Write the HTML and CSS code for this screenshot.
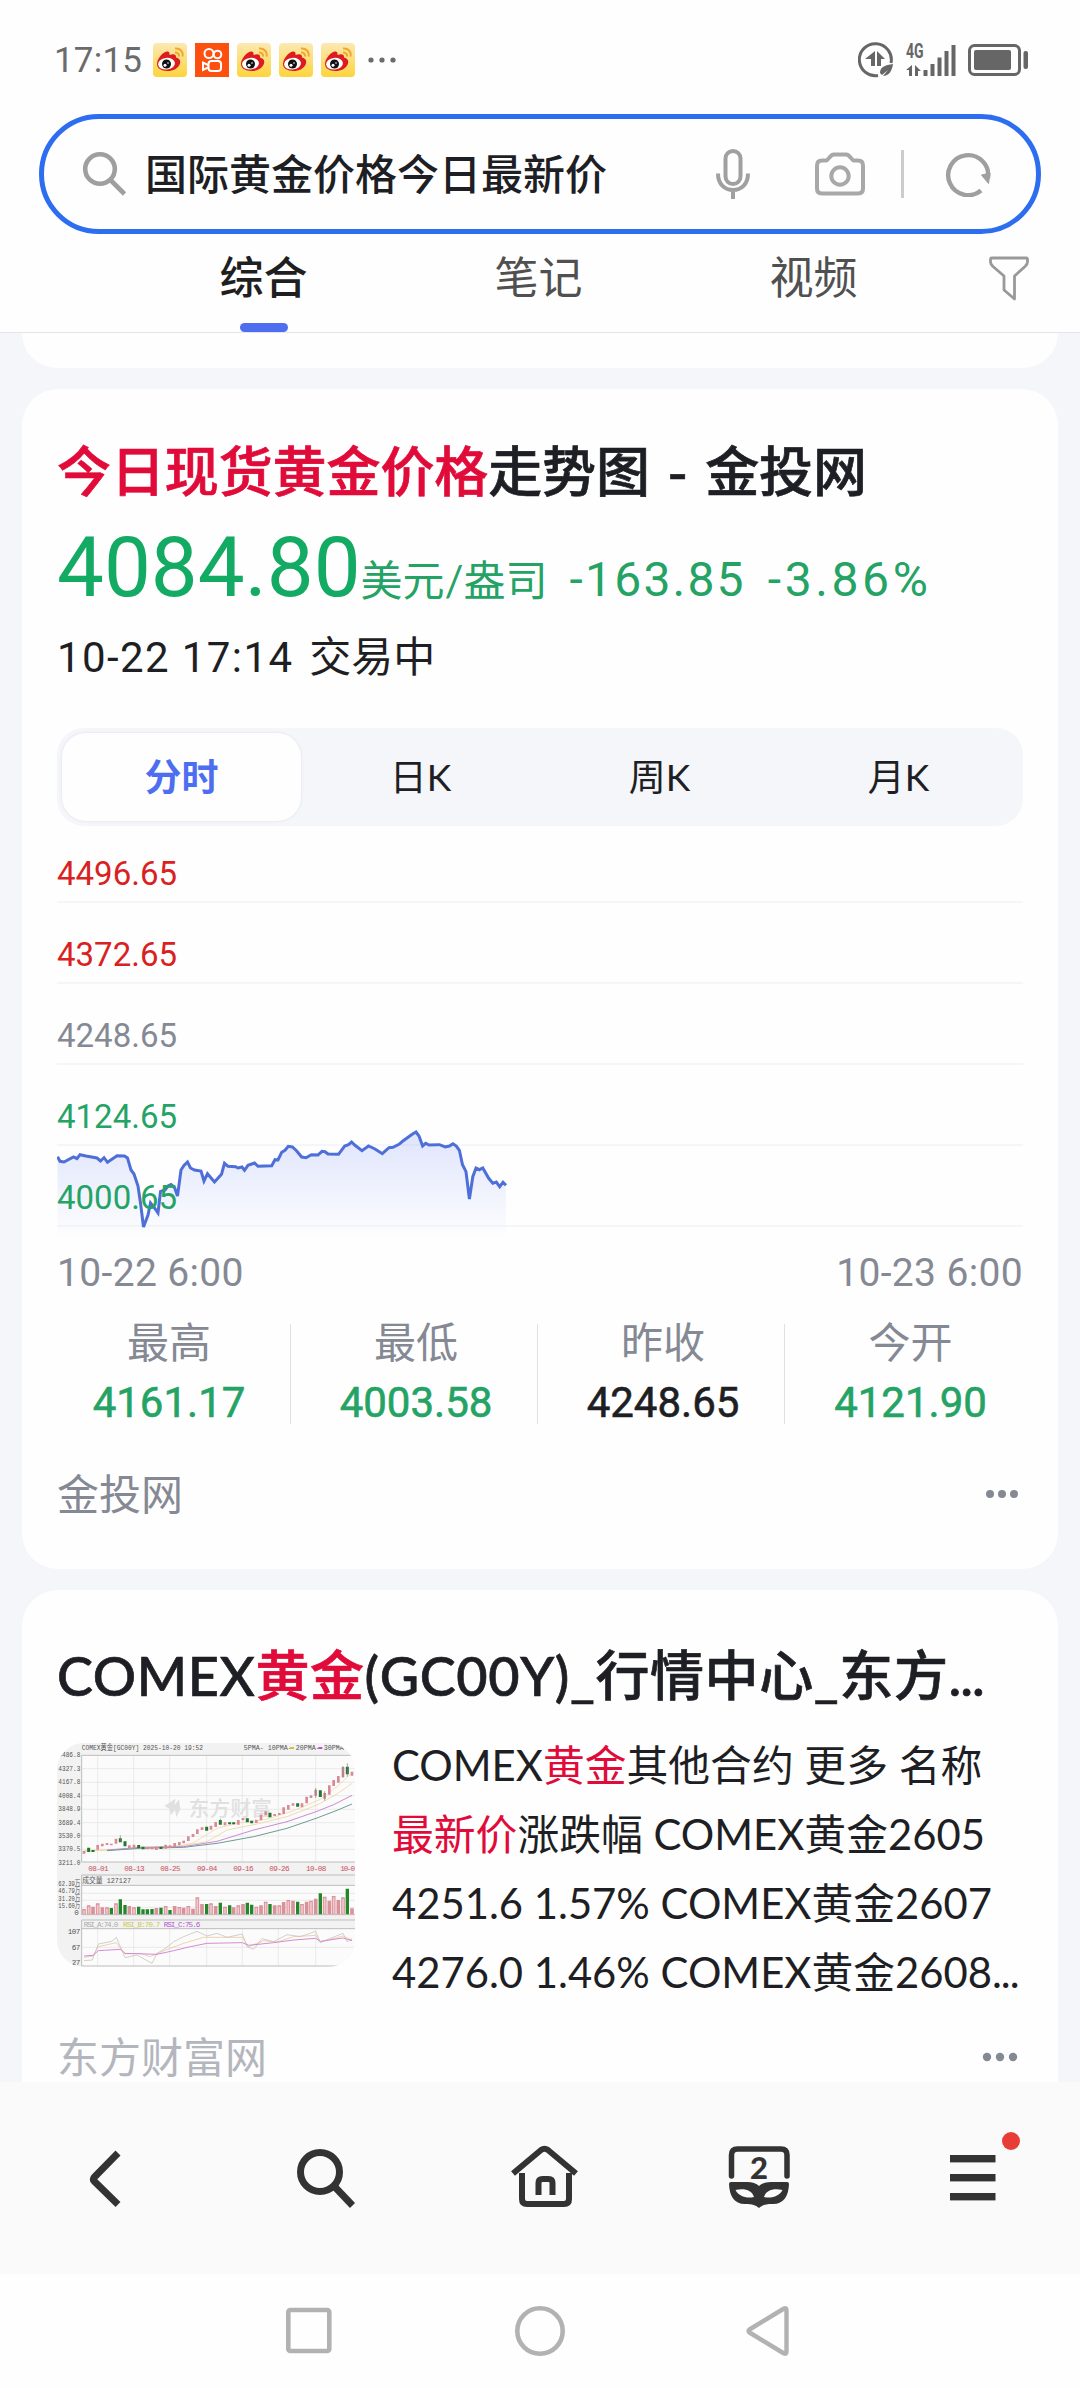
FILE: index.html
```html
<!DOCTYPE html>
<html lang="zh-CN">
<head>
    <meta charset="UTF-8">
    <meta name="viewport" content="width=device-width, initial-scale=1.0">
    <title>国际黄金价格今日最新价</title>
    <link rel="stylesheet" href="styles.css">
</head>
<body>
    <svg class="defs" width="0" height="0">
        <symbol id="weibo" viewBox="0 0 34 34">
            <rect width="34" height="34" rx="4" fill="url(#weiboBg)"/>
            <path d="M22 5.500c5-.5 8.500 3 7.500 8M22 9.500c2.500-.3 4.500 1.500 4 4" fill="none" stroke="#f2a62c" stroke-width="2"/>
            <path d="M4 21C4 15 11 7.500 15 8.500c2 .7 1.500 2.500 1.500 3.500 3-1 7-1.500 6.500 2.500 3 .8 5 2.700 4 6C25.500 25.500 20 28 14.500 28 8 28 4 25 4 21z" fill="#dd1c20"/>
            <ellipse cx="13.500" cy="20.700" rx="8.500" ry="5.800" fill="#fff" transform="rotate(-6 13.500 20.700)"/>
            <circle cx="13.500" cy="21" r="4.500" fill="#111"/>
            <circle cx="12" cy="22.200" r="1.500" fill="#fff"/>
            <circle cx="15" cy="20" r=".8" fill="#fff"/>
        </symbol>
        <linearGradient id="weiboBg" x1="0" y1="0" x2="0" y2="1">
            <stop offset="0" stop-color="#fbe9b4"/>
            <stop offset="1" stop-color="#fdd43c"/>
        </linearGradient>
    </svg>

    <header>
        <div class="status-bar">
            <span class="time">17:15</span>
            <div class="notices">
                <svg width="34" height="34"><use href="#weibo"/></svg>
                <svg width="34" height="34" viewBox="0 0 34 34">
                    <rect width="34" height="34" fill="#fd4f0d"/>
                    <g fill="none" stroke="#fff" stroke-width="2">
                        <circle cx="14" cy="10.500" r="4.500"/>
                        <circle cx="22.500" cy="11.500" r="3.800"/>
                        <rect x="13.500" y="18" width="12.500" height="10" rx="3"/>
                        <path d="M13 22l-5-2.500v7.500l5-2.500"/>
                    </g>
                </svg>
                <svg width="34" height="34"><use href="#weibo"/></svg>
                <svg width="34" height="34"><use href="#weibo"/></svg>
                <svg width="34" height="34"><use href="#weibo"/></svg>
            </div>
            <svg width="28" height="6" viewBox="0 0 28 6" fill="#6b6b6b">
                <circle cx="3" cy="3" r="2.600"/><circle cx="14" cy="3" r="2.600"/><circle cx="25" cy="3" r="2.600"/>
            </svg>
            <div class="signals">
                <svg width="36" height="36" viewBox="0 0 36 36">
                    <path d="M33 21A16 16 0 1 0 20 33.500" fill="none" stroke="#666" stroke-width="3"/>
                    <path d="M17 9v15h-4v-7H7zM19 9l8 8h-4v7h-4z" fill="#666"/>
                    <path d="M22 31c0-6 5-8 13-9-1 7-4 12-10 12l5-6-6 5z" fill="#666"/>
                </svg>
                <div class="network">
                    <span class="net-label">4G</span>
                    <svg width="50" height="33" viewBox="0 0 50 33" fill="#666">
                        <path d="M6 21v11H3v-6H0zM9 21l6 6h-3v5H9z"/>
                        <rect x="17.500" y="26" width="4" height="6"/>
                        <rect x="24.500" y="20" width="4" height="12"/>
                        <rect x="31.500" y="13.500" width="4" height="18.500"/>
                        <rect x="38.500" y="7" width="4" height="25"/>
                        <rect x="45.500" y="1" width="4" height="31"/>
                    </svg>
                </div>
                <svg width="60" height="34" viewBox="0 0 60 34">
                    <rect x="1.500" y="2.500" width="50" height="29" rx="5" fill="none" stroke="#666" stroke-width="3"/>
                    <rect x="6" y="7" width="37" height="20" rx="2" fill="#666"/>
                    <rect x="55.500" y="8" width="4.500" height="18" rx="2" fill="#666"/>
                </svg>
            </div>
        </div>

        <div class="search-box">
            <svg class="icon-search" width="46" height="46" viewBox="0 0 46 46" fill="none" stroke="#9f9f9f" stroke-width="4.600">
                <circle cx="18" cy="18" r="14.800"/>
                <path d="M28.500 29l14 14"/>
            </svg>
            <span class="query">国际黄金价格今日最新价</span>
            <svg class="icon-mic" width="36" height="52" viewBox="0 0 36 52" fill="none" stroke="#a0a0a0" stroke-width="4">
                <rect x="10.500" y="3" width="15" height="33" rx="7.500"/>
                <path d="M3 25.500c0 11 7 16.500 15 16.500s15-5.500 15-16.500M18 42v9"/>
            </svg>
            <svg class="icon-camera" width="52" height="46" viewBox="0 0 52 46" fill="none" stroke="#a8a8a8" stroke-width="4">
                <path d="M8 9.500h4c3 0 3.500-6 8-6h12c4.500 0 5 6 8 6h4q5 0 5 5v23q0 5-5 5H8q-5 0-5-5v-23q0-5 5-5z"/>
                <circle cx="26" cy="25" r="8.700"/>
            </svg>
            <span class="divider"></span>
            <svg class="icon-refresh" width="46" height="46" viewBox="0 0 46 46">
                <path d="M36 39.500A20 20 0 1 1 43 27" fill="none" stroke="#9f9f9f" stroke-width="4.400"/>
                <path d="M36.500 24l8.500-2-1.500 10.500z" fill="#9f9f9f" stroke="#9f9f9f"/>
            </svg>
        </div>

        <nav class="tabs">
            <a class="tab active">综合</a>
            <a class="tab">笔记</a>
            <a class="tab">视频</a>
            <a class="filter">
                <svg width="42" height="46" viewBox="0 0 42 46" fill="none" stroke="#999" stroke-width="2.800" stroke-linejoin="round">
                    <path d="M4 3h34q1.500 0 1.500 1.500V7c0 2-1 3-2.500 4.500L26.500 21v23L16 35V21L5 11.500C3.500 10 2.500 9 2.500 7V4.500Q2.500 3 4 3z"/>
                </svg>
            </a>
        </nav>
    </header>

    <main>
        <section class="card card-tail"></section>

        <section class="card quote">
            <h2><em>今日现货黄金价格</em>走势图 - 金投网</h2>
            <div class="price-row">
                <span class="price">4084.80</span><span class="unit">美元/盎司</span>
                <span class="change">-163.85</span>
                <span class="change percent">-3.86%</span>
            </div>
            <div class="trade-time"><span class="date">10-22 17:14</span> 交易中</div>

            <div class="segments">
                <span class="segment active">分时</span>
                <span class="segment">日K</span>
                <span class="segment">周K</span>
                <span class="segment">月K</span>
            </div>

            <div class="chart">
                <svg class="chart-line" width="965" height="160" viewBox="0 0 965 160">
                    <defs>
                        <linearGradient id="area" x1="0" y1="52" x2="0" y2="158" gradientUnits="userSpaceOnUse">
                            <stop offset="0" stop-color="#4e6ef2" stop-opacity=".18"/>
                            <stop offset="1" stop-color="#4e6ef2" stop-opacity="0"/>
                        </linearGradient>
                        <path id="trend" d="M.5 76.700L3 81.300 7 82 16.500 77 20 78.700 23 74.700 29 76 40 78 43.500 81 47 77.700 50.500 82.300 60 75.700 67.500 76 70.500 78 74 90 77 94 81 106 83.500 123 86.500 147 91 135 93.500 123 97.500 128 101 133 103.500 111.700 108 110 111 106 114 104.500 117.500 107.500 120.500 116 124 90 127 85.500 130.500 82 133.500 88 137.500 90 144 91 147 101 150.500 93.700 157.500 102 164.500 94.300 167.500 83.300 171 86.300 178.500 86.700 181 88 185 87 187.500 90.300 191 85.300 197.500 83 201 86.300 214.700 85.700 218 79.700 221 80 224.700 72.300 228 70.300 231.300 66.300 235.400 67 239.500 70.700 244.700 77 249 77.700 254.400 74.700 261 75 265 71.300 268 71.700 271 74 281.500 74.300 287.700 66 291.500 64.700 294.600 62 298 65.300 305 70.700 311.500 66 318 69 325.300 73.700 332 67.700 336 67.300 342 64.300 345.600 61.300 355.200 54.300 359 52 362 56 365.600 66 368.700 63.300 372 65 382.400 64.700 388.300 67 392.400 66 396 63.700 399.300 66 402.400 70.300 405.500 84.700 409 91.700 412.400 119 415.800 96.700 419 88 422.400 89.700 425.800 88 431.700 98.300 435.800 103.300 439.300 102 442.700 106.700 446 102.300 449 105.300"/>
                    </defs>
                    <path d="M.5 76.700L3 81.300 7 82 16.500 77 23 74.700 40 78 50.500 82.300 60 75.700 70.500 78 74 90 77 94 81 106 86.500 147 93.500 123 101 133 103.500 111.700 114 104.500 120.500 116 124 90 130.500 82 133.500 88 144 91 147 101 150.500 93.700 157.500 102 164.500 94.300 167.500 83.300 187.500 90.300 197.500 83 201 86.300 214.700 85.700 224.700 72.300 231.300 66.300 235.400 67 244.700 77 254.400 74.700 265 71.300 281.500 74.300 294.600 62 305 70.700 311.500 66 325.300 73.700 342 64.300 359 52 365.600 66 388.300 67 396 63.700 402.400 70.300 409 91.700 412.400 119 419 88 425.800 88 435.800 103.300 449 105.300V158H.5z" fill="url(#area)"/>
                    <use href="#trend" fill="none" stroke="#4e6fd8" stroke-width="3"/>
                </svg>
                <div class="grid-row up"><span>4496.65</span></div>
                <div class="grid-row up"><span>4372.65</span></div>
                <div class="grid-row"><span>4248.65</span></div>
                <div class="grid-row down"><span>4124.65</span></div>
                <div class="grid-row down"><span>4000.65</span></div>
            </div>
            <div class="axis"><span>10-22 6:00</span><span>10-23 6:00</span></div>

            <div class="stats">
                <div class="stat"><span>最高</span><b class="down">4161.17</b></div>
                <div class="stat"><span>最低</span><b class="down">4003.58</b></div>
                <div class="stat"><span>昨收</span><b>4248.65</b></div>
                <div class="stat"><span>今开</span><b class="down">4121.90</b></div>
            </div>

            <div class="source">
                <span>金投网</span>
                <svg width="34" height="10" viewBox="0 0 34 10" fill="#858994">
                    <circle cx="5" cy="5" r="4"/><circle cx="17" cy="5" r="4"/><circle cx="29" cy="5" r="4"/>
                </svg>
            </div>
        </section>

        <section class="card result">
            <h2>COMEX<em>黄金</em>(GC00Y)_行情中心_东方<span class="dots">...</span></h2>
            <div class="result-body">
                <svg class="thumb" width="298" height="224" viewBox="50 69 894 672">
                    <rect x="50" y="69" width="894" height="672" fill="#f2f2f2"/>
                    <rect x="124" y="106" width="820" height="320" fill="#fbfbfb"/>
                    <rect x="124" y="496" width="820" height="88" fill="#fbfbfb"/>
                    <rect x="124" y="626" width="820" height="115" fill="#fbfbfb"/>
                    <path d="M124 146H944M124 187H944M124 227H944M124 268H944M124 308H944M124 348H944M124 388H944M124 520H944M124 541H944M124 562H944M124 682H944M172 106V426M280 106V426M388 106V426M499 106V426M606 106V426M714 106V426M826 106V426M172 626V738M280 626V738M388 626V738M499 626V738M606 626V738M714 626V738M826 626V738" stroke="#e2e2e2" stroke-width="2"/>
                    <path d="M944 106H124V426H944M944 465H124V584H944M124 496H944M944 600H124V738H944M124 626H944" fill="none" stroke="#bdbdbd" stroke-width="3"/>
                    <g class="watermark"><path d="M372 258l34-22-4 20 14-18 4 30-12 24-4-22-12 16-4-20z"/><text x="445" y="288" textLength="250">东方财富</text></g>

                    <g fill="none" stroke-width="2">
                        <path d="M131 392L240 388 300 382 420 378 458 369 530 325 600 308 680 298 760 272 840 238 890 200 935 158" stroke="#f0cf98"/>
                        <path d="M131 394L240 388 420 378 500 365 560 330 650 312 740 290 830 255 890 222 935 190" stroke="#eccb8a"/>
                        <path d="M200 390L300 382 430 380 530 364 640 330 740 305 830 274 880 254 935 226" stroke="#c98ad4" stroke-width="3"/>
                        <path d="M200 392L300 385 430 382 530 370 640 350 740 325 830 294 890 271 935 252" stroke="#6f9a96" stroke-width="3"/>
                    </g>
                    <!-- candles -->
                    <path d="M131 393v8M172 375v14M186 371v8M200 369v6M213 371v5M227 356v15M267 376v8M281 374v9M321 382v6M335 382v6M348 380v10M376 374v12M389 376v8M403 369v13M417 366v10M430 362v8M444 349v14M458 342v9M471 328v14M485 322v8M512 317v12M526 306v15M554 307v9M594 300v14M608 294v7M648 299v10M662 284v17M676 274v12M703 282v6M717 279v6M730 262v20M744 255v14M758 250v7M785 250v12M799 230v20M812 226v8M826 209v18M853 219v17M867 196v28M880 180v18M894 168v20M908 141v30M935 155v12" stroke="#d98a95" stroke-width="8"/>
                    <path d="M145 383v13M158 390v6M240 355v12M254 364v15M295 375v9M308 380v8M362 380v7M499 320v12M540 300v14M568 307v6M580 307v6M621 295v12M634 302v8M689 278v14M772 250v10M840 211v20M921 140v23" stroke="#23772e" stroke-width="9"/>
                    <path d="M240 346v20M540 296v12M826 204v30M853 214v28M921 130v40M908 138v36" stroke="#7a7a7a" stroke-width="2"/>
                    <!-- volume -->
                    <path d="M131 583V567M145 583V556M158 583V560M172 583V550M186 583V562M200 583V562M227 583V550M267 583V558M281 583V562M348 583V564M376 583V558M403 583V558M417 583V561M430 583V563M444 583V558M458 583V566M471 583V532M485 583V552M512 583V550M526 583V558M554 583V560M580 583V562M594 583V556M608 583V552M648 583V560M662 583V556M676 583V545M703 583V556M717 583V556M730 583V546M744 583V540M758 583V542M785 583V552M799 583V545M812 583V542M826 583V536M853 583V530M867 583V542M880 583V528M894 583V540M908 583V532M935 583V565" stroke="#d8929a" stroke-width="11"/>
                    <path d="M131 581V571M145 581V560M172 581V554M200 581V566M227 581V554M281 581V566M376 581V562M417 581V565M444 581V562M471 581V536M512 581V554M554 581V564M594 581V560M648 581V564M676 581V549M717 581V560M744 581V544M785 581V556M812 581V546M853 581V534M880 581V532M908 581V536" stroke="#f3c7cb" stroke-width="5"/>
                    <path d="M213 583V564M240 583V538M254 583V555M295 583V560M308 583V568M321 583V568M335 583V567M362 583V563M389 583V570M499 583V552M540 583V548M568 583V556M621 583V548M634 583V554M689 583V552M772 583V545M840 583V520M921 583V506" stroke="#23862b" stroke-width="10"/>
                    <!-- rsi -->
                    <g fill="none" stroke-width="2">
                        <path d="M131 722L156 720 174 672 215 664 228 652 254 713 290 705 335 730 350 700 376 685 400 665 430 650 470 634 500 648 530 640 560 652 606 642 620 680 640 688 665 656 700 665 740 644 780 650 826 634 840 668 870 655 908 640 920 665 935 656" stroke="#b9bcb4"/>
                        <path d="M131 712L158 708 174 680 228 668 254 702 300 700 330 710 376 690 430 670 490 652 540 652 606 652 625 680 670 662 710 666 760 650 826 646 840 666 908 648 935 660" stroke="#e3bf8c"/>
                        <path d="M131 708L158 706 174 692 240 688 254 700 350 703 400 692 450 680 500 670 606 668 625 676 700 668 760 660 826 655 840 664 908 654 935 662" stroke="#d58ad4" stroke-width="3"/>
                    </g>
                    <g class="thumb-text">
                        <text x="124" y="91" textLength="364" lengthAdjust="spacingAndGlyphs">COMEX黄金[GC00Y] 2025-10-20 19:52</text>
                        <text x="610" y="91" textLength="300" lengthAdjust="spacingAndGlyphs">5PMA- 10PMA- 20PMA- 30PMA</text>
                        <text x="54" y="112" textLength="66" lengthAdjust="spacingAndGlyphs">4486.8</text>
                        <text x="54" y="152" textLength="66" lengthAdjust="spacingAndGlyphs">4327.3</text>
                        <text x="54" y="193" textLength="66" lengthAdjust="spacingAndGlyphs">4167.8</text>
                        <text x="54" y="233" textLength="66" lengthAdjust="spacingAndGlyphs">4008.4</text>
                        <text x="54" y="274" textLength="66" lengthAdjust="spacingAndGlyphs">3848.9</text>
                        <text x="54" y="314" textLength="66" lengthAdjust="spacingAndGlyphs">3689.4</text>
                        <text x="54" y="354" textLength="66" lengthAdjust="spacingAndGlyphs">3530.0</text>
                        <text x="54" y="394" textLength="66" lengthAdjust="spacingAndGlyphs">3370.5</text>
                        <text x="54" y="434" textLength="66" lengthAdjust="spacingAndGlyphs">3211.0</text>
                        <text x="126" y="490" textLength="146" lengthAdjust="spacingAndGlyphs">成交量 127127</text>
                        <text x="54" y="498" textLength="66" lengthAdjust="spacingAndGlyphs">62.39万</text>
                        <text x="54" y="519" textLength="66" lengthAdjust="spacingAndGlyphs">46.79万</text>
                        <text x="54" y="542" textLength="66" lengthAdjust="spacingAndGlyphs">31.20万</text>
                        <text x="54" y="565" textLength="66" lengthAdjust="spacingAndGlyphs">15.60万</text>
                        <text x="102" y="586">0</text>
                        <text x="82" y="641" textLength="38">107</text>
                        <text x="94" y="690" textLength="26">67</text>
                        <text x="94" y="736" textLength="26">27</text>
                    </g>
                    <g class="thumb-dates">
                        <text x="144" y="453">08-01</text>
                        <text x="252" y="453">08-13</text>
                        <text x="360" y="453">08-25</text>
                        <text x="470" y="453">09-04</text>
                        <text x="579" y="453">09-16</text>
                        <text x="687" y="453">09-26</text>
                        <text x="797" y="453">10-08</text>
                        <text x="900" y="453" textLength="42">10-0</text>
                    </g>
                    <g class="thumb-rsi">
                        <text x="130" y="620" fill="#aaa" textLength="104">RSI_A:74.0</text>
                        <text x="248" y="620" fill="#cdc94a" textLength="112">RSI_B:70.7</text>
                        <text x="370" y="620" fill="#b355cf" textLength="110">RSI_C:75.6</text>
                    </g>
                    <path d="M749 84h12" stroke="#cfc53a" stroke-width="6"/>
                    <path d="M834 84h12" stroke="#c14fd0" stroke-width="6"/>
                </svg>
                <p>COMEX<em>黄金</em>其他合约 更多 名称<br><em>最新价</em>涨跌幅 COMEX黄金2605<br>4251.6 1.57% COMEX黄金2607<br>4276.0 1.46% COMEX黄金2608<span class="dots">...</span></p>
            </div>
            <div class="source faded">
                <span>东方财富网</span>
                <svg width="36" height="10" viewBox="0 0 36 10" fill="#858994">
                    <circle cx="5" cy="5" r="4.200"/><circle cx="18" cy="5" r="4.200"/><circle cx="31" cy="5" r="4.200"/>
                </svg>
            </div>
        </section>
    </main>

    <footer>
        <div class="toolbar">
            <a>
                <svg width="64" height="64" viewBox="0 0 64 64" fill="none" stroke="#333" stroke-width="7" stroke-linejoin="round">
                    <path d="M43 7L19.500 31q-2.500 2 0 4.500L43 58.500"/>
                </svg>
            </a>
            <a class="find">
                <svg width="64" height="64" viewBox="0 0 64 64" fill="none" stroke="#333" stroke-width="7">
                    <circle cx="26" cy="26" r="19.500"/>
                    <path d="M40 40l18.500 19.500"/>
                </svg>
            </a>
            <a class="home">
                <svg width="70" height="66" viewBox="0 0 70 66" fill="none" stroke="#333" stroke-width="6">
                    <path d="M3 28.500L31 5q3.500-2.500 7 0L66 28.500"/>
                    <path d="M12 28v26q0 5 5 5H54q5 0 5-5V28"/>
                    <path d="M28.500 50V38q0-4 4-4h6q4 0 4 4v12"/>
                </svg>
            </a>
            <a class="windows">
                <svg width="62" height="66" viewBox="0 0 62 66">
                    <path d="M3.500 31V10q0-6 6-6H53q6 0 6 6v21" fill="none" stroke="#333" stroke-width="5.500" stroke-linecap="round"/>
                    <path fill-rule="evenodd" fill="#333" d="M3 37h16q8 0 12 4 4-4 12-4h16q2 0 2 2c-.5 12-5 20-16 20-8 0-10 1-14 4-4-3-6-4-14-4C6 59 1.500 51 1 39q0-2 2-2zM7.500 45c3 6 11 9 18.500 7-2-6.500-9-9-18.500-7zM54.500 45c-9.500-2-16.500.5-18.500 7 7.500 2 15.500-1 18.500-7z"/>
                </svg>
                <span class="count">2</span>
            </a>
            <a class="menu">
                <svg width="46" height="46" viewBox="0 0 46 46" fill="#333">
                    <rect y="0" width="45.500" height="7.400"/><rect y="19" width="45.500" height="7.400"/><rect y="38" width="45.500" height="7.400"/>
                </svg>
                <span class="badge"></span>
            </a>
        </div>
        <div class="system-nav">
            <svg width="50" height="52" viewBox="0 0 50 52" fill="none" stroke="#b2b2b2" stroke-width="4.600"><rect x="4.300" y="5" width="41" height="41" rx="2"/></svg>
            <svg width="52" height="52" viewBox="0 0 52 52" fill="none" stroke="#b2b2b2" stroke-width="4.600"><circle cx="26" cy="26" r="22.700"/></svg>
            <svg width="50" height="52" viewBox="0 0 50 52" fill="none" stroke="#b2b2b2" stroke-width="4.400" stroke-linejoin="round"><path d="M3.500 24.500L38 3.500q2.500-1 2.500 1.500v42q0 2.500-2.500 1.500L3.500 27.500q-2-1.500 0-3z"/></svg>
        </div>
    </footer>
</body>
</html>
```
FILE: styles.css
```css
* {
    box-sizing: border-box;
}

body {
    margin: 0;
    width: 1080px;
    height: 2388px;
    display: flex;
    flex-direction: column;
    overflow: hidden;
    background: #f5f6fa;
    color: #1e1f24;
    font-family: Lato, "Noto Sans CJK SC", sans-serif;
    font-size: 42px;
}

svg {
    display: block;
    flex: none;
}

.defs {
    position: absolute;
}

em {
    font-style: normal;
    color: #e10b3a;
}

/* Header */
header {
    background: #fefefe;
    height: 333px;
    border-bottom: 1px solid #e4e5e8;
}

.status-bar {
    height: 114px;
    padding: 6px 52px 0 54px;
    display: flex;
    align-items: center;
}

.time {
    width: 99px;
    font-family: Roboto, sans-serif;
    font-size: 35px;
    letter-spacing: .2px;
    color: #6b6b6b;
}

.notices {
    display: flex;
    gap: 8px;
    margin-right: 13px;
}

.signals {
    display: flex;
    align-items: center;
    gap: 12px;
    margin-left: auto;
}

.network {
    position: relative;
}

.net-label {
    position: absolute;
    left: 0;
    top: -2px;
    font: bold 20px/18px Roboto, sans-serif;
    transform: scaleX(.7);
    transform-origin: left;
    color: #666;
}

.search-box {
    margin: 0 39px;
    height: 120px;
    border: 5px solid #2d6ef0;
    border-radius: 60px;
    display: flex;
    align-items: center;
    padding: 0 45px 0 38px;
}

.query {
    margin: 0 auto 4px 17px;
    font-family: "Noto Sans CJK SC", sans-serif;
    font-weight: 500;
    line-height: 60px;
}

.icon-mic {
    margin-right: 63px;
}

.icon-camera {
    margin-right: 35px;
}

.divider {
    width: 3px;
    height: 48px;
    background: #ccc;
    margin-right: 41px;
}

.tabs {
    display: flex;
    height: 98px;
    padding-left: 126px;
    font-family: "Noto Sans CJK SC", sans-serif;
    font-size: 44px;
}

.tab {
    width: 275px;
    display: flex;
    flex-direction: column;
    align-items: center;
    justify-content: space-between;
    line-height: 82px;
    color: #505050;
}

.tab.active {
    font-weight: 500;
    color: #1f1f1f;
}

.tab.active::after {
    content: "";
    width: 48px;
    height: 9px;
    border-radius: 5px;
    background: #4e6ef2;
}

.filter {
    width: 116px;
    display: flex;
    justify-content: center;
    padding-top: 21px;
}

/* Cards */
main {
    flex: 1;
    overflow: hidden;
    padding: 0 22px;
    display: flex;
    flex-direction: column;
    gap: 21px;
}

.card {
    flex: none;
    background: #fefefe;
    border-radius: 36px;
    padding: 0 35px;
}

.card-tail {
    height: 35px;
    border-radius: 0 0 36px 36px;
}

.card h2 {
    margin: 0;
    font-size: 54px;
    font-weight: 500;
    line-height: 70px;
    letter-spacing: .6px;
    white-space: nowrap;
    -webkit-text-stroke: .7px currentColor;
}

.quote {
    height: 1180px;
    padding-top: 45px;
}

.quote h2 {
    font-family: "Noto Sans CJK SC", sans-serif;
    letter-spacing: -.1px;
    word-spacing: 6px;
}

.price-row {
    display: flex;
    align-items: baseline;
    height: 100px;
    line-height: 100px;
    margin-top: 14px;
    color: #24a365;
    white-space: nowrap;
}

.price {
    font-family: Roboto, sans-serif;
    font-size: 83.5px;
    color: #13aa63;
}

.unit {
    margin-right: 22px;
}

.change {
    font-family: Roboto, sans-serif;
    font-size: 48px;
    letter-spacing: 2.2px;
    margin-right: 22px;
}

.percent {
    letter-spacing: 3.6px;
}

.trade-time {
    line-height: 60px;
    margin-top: 8px;
    white-space: nowrap;
}

.date {
    font-family: Roboto, sans-serif;
    letter-spacing: 1.4px;
    margin-right: 5px;
}

.segments {
    height: 98px;
    margin-top: 40px;
    padding: 5px;
    display: flex;
    border-radius: 27px;
    background: #f5f6fa;
    font-size: 37px;
}

.segment {
    flex: 1;
    display: flex;
    align-items: center;
    justify-content: center;
    padding-bottom: 5px;
}

.segment.active {
    border-radius: 24px;
    background: #fefefe;
    box-shadow: 0 0 3px rgba(30, 31, 60, .1);
    color: #4e6ef2;
    font-weight: 700;
}

.chart {
    position: relative;
    font-family: Roboto, sans-serif;
    font-size: 33px;
    color: #858994;
}

.chart-line {
    position: absolute;
    left: 0;
    bottom: -13px;
}

.grid-row {
    height: 81px;
    padding-top: 32px;
    line-height: 40px;
    border-bottom: 2px solid #f5f6f9;
}

/* keeps the labels above the line */
.grid-row span {
    position: relative;
}

.grid-row:first-of-type {
    height: 77px;
    padding-top: 28px;
}

.up {
    color: #d92121;
}

.down {
    color: #24a365;
}

.axis {
    display: flex;
    justify-content: space-between;
    margin-top: 21px;
    font-family: Roboto, sans-serif;
    font-size: 39px;
    letter-spacing: .35px;
    line-height: 50px;
    color: #858994;
}

.stats {
    display: grid;
    grid-template-columns: repeat(4, 247px);
    margin: 26px -13px 0;
    height: 100px;
}

.stat {
    display: flex;
    flex-direction: column;
    align-items: center;
    justify-content: space-between;
    padding-left: 4px;
    border-right: 1px solid #dfe1e6;
    line-height: 36px;
}

.stat:last-child {
    border: none;
}

.stat span {
    color: #858994;
}

.stat b {
    font-family: Roboto, sans-serif;
    font-weight: 400;
    line-height: 42px;
    -webkit-text-stroke: .6px currentColor;
}

.source {
    display: flex;
    align-items: center;
    justify-content: space-between;
    margin-top: 40px;
    padding-right: 4px;
    line-height: 60px;
    color: #858994;
}

.faded {
    color: #b4b6bd;
    margin-top: 20px;
    padding-right: 5px;
}

.result {
    height: 600px;
    padding-top: 51px;
}

.result-body {
    display: flex;
    margin-top: 10px;
}

.result-body p {
    margin: 10px 0 0 37px;
    font-size: 41.8px;
    line-height: 69px;
    white-space: nowrap;
}

.dots {
    letter-spacing: -1px;
}

.thumb {
    margin-top: 22px;
    border-radius: 27px;
}

.thumb-text,
.thumb-dates,
.thumb-rsi {
    font-family: "Liberation Mono", "Noto Sans CJK SC", monospace;
    font-size: 23px;
    fill: #555;
}

.thumb-dates {
    fill: #c9505f;
    letter-spacing: -2px;
}

.thumb-rsi {
    fill: inherit;
}

.watermark {
    fill: #e0e0e0;
    font: 500 62px "Noto Sans CJK SC", sans-serif;
}

/* Bottom bars */
.toolbar {
    height: 192px;
    display: flex;
    background: #fafafa;
}

.toolbar a {
    flex: 1;
    display: flex;
    align-items: center;
    justify-content: center;
}

.toolbar .find,
.toolbar .home {
    padding-left: 5px;
}

.windows,
.menu {
    position: relative;
}

.count {
    position: absolute;
    font: 900 31px/30px Lato, sans-serif;
    top: 70px;
    color: #333;
}

.badge {
    position: absolute;
    left: 136px;
    top: 50px;
    width: 18px;
    height: 18px;
    border-radius: 50%;
    background: #e83c36;
}

.system-nav {
    height: 114px;
    display: flex;
    justify-content: center;
    align-items: center;
    gap: 180px;
    background: #fefefe;
}
```
